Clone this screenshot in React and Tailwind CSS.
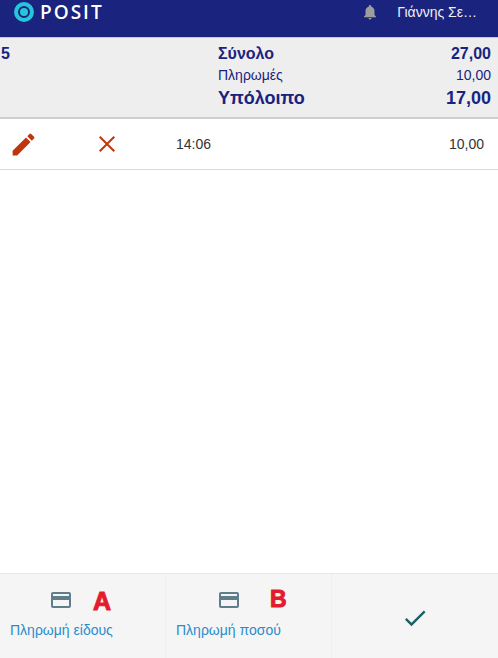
const F = '"Liberation Sans", Arial, sans-serif';

function Pencil() {
  return (
    <svg width="29" height="29" viewBox="0 0 24 24" fill="#bf360c" className="block">
      <path d="M3 17.25V21h3.75L17.81 9.94l-3.75-3.75L3 17.25zM20.71 7.04a1 1 0 0 0 0-1.41l-2.34-2.34a1 1 0 0 0-1.41 0l-1.83 1.83 3.75 3.75 1.83-1.83z" />
    </svg>
  );
}
function Close() {
  return (
    <svg width="24" height="24" viewBox="0 0 24 24" fill="#bf360c" className="block">
      <path d="M20 5.4 18.6 4 12 10.6 5.4 4 4 5.4 10.6 12 4 18.6 5.4 20 12 13.4 18.6 20 20 18.6 13.4 12z" />
    </svg>
  );
}
function Card() {
  return (
    <svg width="24" height="24" viewBox="0 0 24 24" fill="#607d8b" className="block">
      <path d="M20 4H4c-1.11 0-2 .89-2 2v12c0 1.11.89 2 2 2h16c1.11 0 2-.89 2-2V6c0-1.11-.89-2-2-2zm0 14H4v-6h16v6zm0-10H4V6h16v2z" />
    </svg>
  );
}
function Check() {
  return (
    <svg width="28" height="28" viewBox="0 0 24 24" fill="#1c5f67" className="block">
      <path d="M9 16.17 4.83 12l-1.42 1.41L9 19 21 7l-1.41-1.41z" />
    </svg>
  );
}
function Bell() {
  return (
    <svg width="18" height="18" viewBox="0 0 24 24" fill="#9e9e9e" className="block">
      <path d="M12 22c1.1 0 2-.9 2-2h-4c0 1.1.9 2 2 2zm6-6v-5c0-3.07-1.63-5.64-4.5-6.32V4c0-.83-.67-1.5-1.5-1.5s-1.5.67-1.5 1.5v.68C7.64 5.36 6 7.92 6 11v5l-2 2v1h16v-1l-2-2z" />
    </svg>
  );
}

export default function App() {
  return (
    <div className="w-[498px] h-[658px] flex flex-col bg-white overflow-hidden" style={{ fontFamily: F }}>
      <header className="h-[37px] shrink-0 bg-[#1a237e] flex items-center justify-between">
        <div className="flex items-center pl-[14px] pb-[13px]">
          <div className="w-[20px] h-[20px] rounded-full border-[4px] border-[#26c6da] flex items-center justify-center">
            <div className="w-[8px] h-[8px] rounded-full bg-[#26c6da]" />
          </div>
          <span className="ml-[6px] text-white text-[19px] leading-[20px] tracking-[2px]" style={{ fontFamily: '"Open Sans", sans-serif', fontWeight: 600 }}>POSIT</span>
        </div>
        <div className="flex items-center pb-[13px] pr-[21px]">
          <Bell />
          <span className="ml-[18px] text-[#f0f0f0] text-[14px] leading-[20px] whitespace-nowrap">Γιάννης Σε…</span>
        </div>
      </header>

      <section className="h-[82px] shrink-0 bg-[#eeeeee] border-t border-[#c9c9c9] border-b-2 border-b-[#cfcfcf] flex text-[#1a237e]">
        <div className="w-[218px] pl-[1px] pt-[7px] text-[16px] leading-[18px] font-bold">5</div>
        <div className="flex-1 pr-[7px] flex flex-col pt-[6px]">
          <div className="flex justify-between items-center h-[20px] text-[16px] font-bold">
            <span>Σύνολο</span><span>27,00</span>
          </div>
          <div className="flex justify-between items-center h-[23px] text-[14px]">
            <span>Πληρωμές</span><span>10,00</span>
          </div>
          <div className="flex justify-between items-center h-[23px] text-[18px] font-bold">
            <span>Υπόλοιπο</span><span>17,00</span>
          </div>
        </div>
      </section>

      <div className="h-[51px] shrink-0 border-b border-[#d9d9d9] flex items-center text-[#333333] text-[14px]">
        <div className="w-[95px] pl-[9px]"><Pencil /></div>
        <div className="w-[81px]"><Close /></div>
        <span>14:06</span>
        <span className="ml-auto pr-[14px]">10,00</span>
      </div>

      <div className="flex-1" />

      <footer className="h-[85px] shrink-0 bg-[#f5f5f5] border-t border-[#e8e8e8] flex">
        <div className="w-[166px] border-r border-[#eeeeee] relative flex flex-col items-start pt-[14px] pl-[10px]">
          <div className="ml-[39px]"><Card /></div>
          <span className="mt-[8px] text-[14px] leading-[20px] text-[#2b8ccb]">Πληρωμή είδους</span>
          <span className="absolute left-[93px] top-[11px] text-[#e31c2d] text-[25px] leading-[32px] font-bold [-webkit-text-stroke:1px_#e31c2d]">A</span>
        </div>
        <div className="w-[166px] border-r border-[#eeeeee] relative flex flex-col items-start pt-[14px] pl-[10px]">
          <div className="ml-[41px]"><Card /></div>
          <span className="mt-[8px] text-[14px] leading-[20px] text-[#2b8ccb]">Πληρωμή ποσού</span>
          <span className="absolute left-[104px] top-[9px] text-[#e31c2d] text-[23px] leading-[32px] font-bold [-webkit-text-stroke:1px_#e31c2d]">B</span>
        </div>
        <div className="flex-1 flex items-center justify-center pt-[4px]"><Check /></div>
      </footer>
    </div>
  );
}
